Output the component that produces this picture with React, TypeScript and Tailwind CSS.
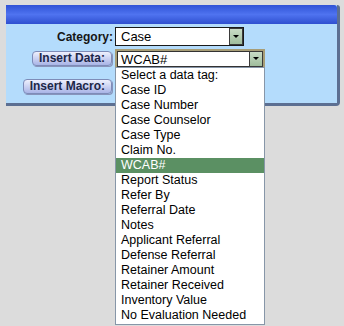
const tags = [
  "Select a data tag:",
  "Case ID",
  "Case Number",
  "Case Counselor",
  "Case Type",
  "Claim No.",
  "WCAB#",
  "Report Status",
  "Refer By",
  "Referral Date",
  "Notes",
  "Applicant Referral",
  "Defense Referral",
  "Retainer Amount",
  "Retainer Received",
  "Inventory Value",
  "No Evaluation Needed",
];

function Arrow() {
  return (
    <div className="w-[14px] h-full flex items-center justify-center border border-[#3a3a3a] bg-gradient-to-b from-[#c9dcc6] to-[#9fbd9c]">
      <div className="w-0 h-0 border-l-[3px] border-r-[3px] border-t-[3px] border-l-transparent border-r-transparent border-t-black" />
    </div>
  );
}

function Btn({ label }: { label: string }) {
  return (
    <button className="h-[15px] px-[6px] rounded-[4px] border border-[#7e8cb8] bg-gradient-to-b from-[#eef0fd] to-[#a9b4e6] text-[12px] leading-[13px] font-bold text-[#1d2748] shadow-[1px_1px_0_#8894bb]">
      {label}
    </button>
  );
}

export default function App() {
  return (
    <div className="relative w-[344px] h-[326px] bg-[#dcdcdc] pt-[5px] pl-[6px] overflow-hidden" style={{ fontFamily: '"Liberation Sans", Arial, sans-serif' }}>
      <div className="w-[334px] rounded-tr-[3px] rounded-br-[4px] border-r-[3px] border-b-[3px] border-[#5c6f92] bg-[#b4dcfc] pb-[9px]">
        <div className="h-[19px] rounded-tr-[3px] bg-gradient-to-b from-[#2f52d6] via-[#4f73f0] to-[#2f4fd0]" />
        <div className="pt-[3px] flex flex-col">
          <div className="flex items-center h-[19px]">
            <div className="w-[107px] text-right text-[12px] font-bold text-[#161616]">Category:</div>
            <div className="ml-[2px] w-[129px] h-[19px] flex bg-white border border-[#1a1a1a]">
              <div className="flex-1 pl-[5px] text-[13px] leading-[17px] text-black">Case</div>
              <Arrow />
            </div>
          </div>
          <div className="flex items-center h-[21px] mt-[2px]">
            <div className="w-[106px] flex justify-end">
              <Btn label="Insert Data:" />
            </div>
            <div className="ml-[3px] w-[150px] h-[20px] flex bg-white border-2 border-[#a79d76]">
              <div className="flex-1 flex border border-[#333] border-r-0">
                <div className="flex-1 pl-[3px] text-[13px] leading-[15px] text-black">WCAB#</div>
              </div>
              <Arrow />
            </div>
          </div>
          <div className="flex items-center h-[15px] mt-[10px]">
            <div className="w-[106px] flex justify-end">
              <Btn label="Insert Macro:" />
            </div>
          </div>
        </div>
      </div>
      <div className="absolute left-[115px] top-[67px] w-[150px] bg-white border border-[#8796a8] pb-[1px]">
        {tags.map((t) => (
          <div
            key={t}
            className={
              t === "WCAB#"
                ? "h-[15px] pl-[5px] text-[12.5px] leading-[15px] bg-[#5b9063] text-white"
                : "h-[15px] pl-[5px] text-[12.5px] leading-[15px] text-black"
            }
          >
            {t}
          </div>
        ))}
      </div>
    </div>
  );
}
